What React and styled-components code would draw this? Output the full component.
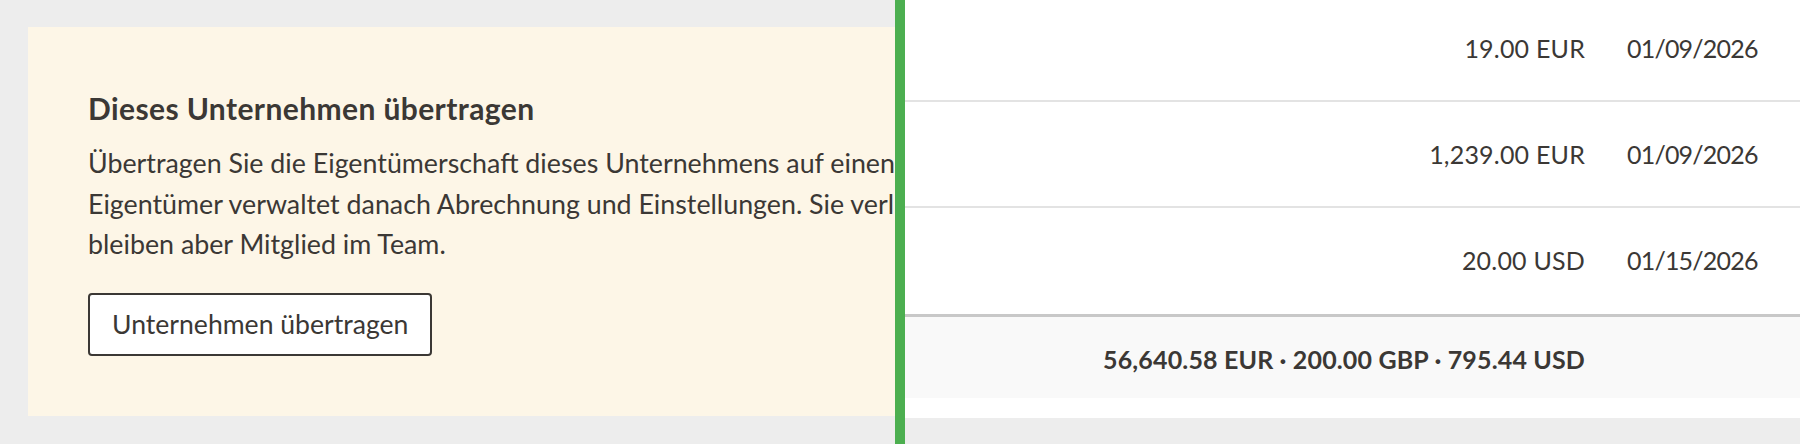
import React from "react";
import styled, { createGlobalStyle } from "styled-components";

const Global = createGlobalStyle`
  html, body { margin: 0; padding: 0; background: #ededed; }
  body { font-family: "Lato", "Liberation Sans", sans-serif; color: #3b3835; }
  * { box-sizing: border-box; }
`;

const Split = styled.div`
  display: grid;
  grid-template-columns: 895px 10px 1fr;
  height: 444px;
  overflow: hidden;
`;

const LeftPane = styled.div`
  background: #ededed;
  padding: 27px 0 0 28px;
  overflow: hidden;
`;

const Divider = styled.div`
  background: #4caf50;
`;

const RightPane = styled.div`
  background: #ededed;
  overflow: hidden;
  display: flex;
  flex-direction: column;
`;

const Card = styled.section`
  width: 1180px;
  height: 389px;
  background: #fdf6e7;
  padding: 62px 60px 60px 60px;
  display: flex;
  flex-direction: column;
  align-items: flex-start;
`;

const Heading = styled.h2`
  margin: 0;
  font-size: 30px;
  line-height: 38px;
  font-weight: 700;
  letter-spacing: 0.4px;
  color: #3b3835;
`;

const Text = styled.p`
  margin: 16px 0 0;
  font-size: 26.8px;
  line-height: 40.5px;
  white-space: nowrap;
  color: #3b3835;
`;

const OutlineButton = styled.button`
  margin-top: 28px;
  height: 63px;
  padding: 0 22px;
  border: 2px solid #3b3835;
  border-radius: 4px;
  background: #ffffff;
  font-family: inherit;
  font-size: 26.6px;
  line-height: 59px;
  color: #3b3835;
  cursor: pointer;
`;

const Table = styled.div`
  background: #ffffff;
  margin-top: -4px;
`;

const Row = styled.div`
  display: flex;
  align-items: center;
  height: 106px;
  border-bottom: 2px solid ${(p) => (p.$last ? "transparent" : "#e3e3e3")};
  font-size: 25px;
  line-height: 30px;
`;

const Amount = styled.div`
  flex: 1;
  text-align: right;
  padding-right: 42px;
  letter-spacing: 0.2px;
`;

const DateCell = styled.div`
  width: 173px;
  letter-spacing: -0.8px;
`;

const Totals = styled.div`
  border-top: 3px solid #c8c8c8;
  background: #f9f9f9;
  height: 84px;
  display: flex;
  align-items: center;
  justify-content: flex-end;
  padding: 2px 215px 0 0;
  font-size: 25px;
  line-height: 30px;
  font-weight: 700;
  letter-spacing: 0.15px;
`;

const Spacer = styled.div`
  background: #ffffff;
  height: 20px;
`;

const Section = styled.div`
  flex: 1;
  background: #ededed;
  padding: 26px 0 0 155px;
`;

const NextCard = styled.div`
  background: #ffffff;
  height: 40px;
`;

const rows = [
  { amount: "19.00 EUR", date: "01/09/2026" },
  { amount: "1,239.00 EUR", date: "01/09/2026" },
  { amount: "20.00 USD", date: "01/15/2026" },
];

export default function App() {
  return (
    <>
      <Global />
      <Split>
        <LeftPane>
          <Card>
            <Heading>Dieses Unternehmen übertragen</Heading>
            <Text>
              Übertragen Sie die Eigentümerschaft dieses Unternehmens auf einen neuen Administrator. Der neue
              <br />
              Eigentümer verwaltet danach Abrechnung und Einstellungen. Sie verlieren Ihre Rechte,
              <br />
              bleiben aber Mitglied im Team.
            </Text>
            <OutlineButton type="button">Unternehmen übertragen</OutlineButton>
          </Card>
        </LeftPane>
        <Divider />
        <RightPane>
          <Table>
            {rows.map((r, i) => (
              <Row key={i} $last={i === rows.length - 1}>
                <Amount>{r.amount}</Amount>
                <DateCell>{r.date}</DateCell>
              </Row>
            ))}
            <Totals>56,640.58 EUR · 200.00 GBP · 795.44 USD</Totals>
            <Spacer />
          </Table>
          <Section>
            <NextCard />
          </Section>
        </RightPane>
      </Split>
    </>
  );
}
